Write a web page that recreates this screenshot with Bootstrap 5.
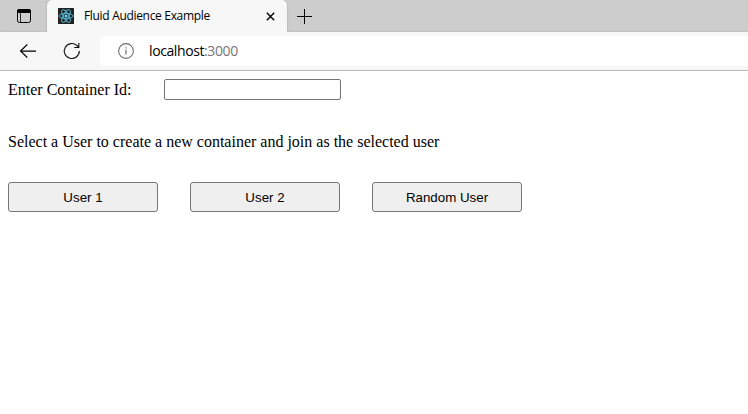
<!DOCTYPE html>
<html lang="en">
<head>
<meta charset="utf-8">
<meta name="viewport" content="width=device-width, initial-scale=1">
<title>Fluid Audience Example</title>
<link href="https://cdn.jsdelivr.net/npm/bootstrap@5.3.0/dist/css/bootstrap.min.css" rel="stylesheet">
<style>
  body { background: #fff; color: #000; overflow: hidden; }
  svg { display: block; flex: none; }
  .chrome { font-family: "Open Sans", "Noto Sans", sans-serif; }
  .tabstrip { height: 32px; background: #cdcdcd; box-shadow: inset 0 -1px 1px #c2c2c2; }
  .menu-cell { width: 47px; padding-left: 17px; }
  .tab-active { width: 240px; padding: 0 12px 0 11px; background: #f7f7f7; border-radius: 5px 5px 0 0; box-shadow: 0 0 2px #999; clip-path: inset(0 -3px 0 -3px); }
  .tab-title { font-size: 12px; line-height: 16px; margin-left: 10px; letter-spacing: -.32px; white-space: nowrap; }
  .new-tab { margin-left: 10px; }
  .toolbar { height: 39px; background: #f7f7f7; border-bottom: 1px solid #bbb; padding-left: 19px; }
  .address { height: 30px; margin-left: 19px; padding-left: 17px; background: #fff; border-radius: 4px 0 0 4px; font-size: 14px; letter-spacing: -.4px; box-shadow: 0 0 2px #eee; }
  .address-text { margin-left: 14px; padding-bottom: 1px; }
  .port { color: #767676; }
  .page { font-family: "Liberation Serif", serif; font-size: 16px; line-height: 18px; padding: 8px; }
  .id-label { width: 156px; }
  .id-input { width: 177px; height: 21px; border: 1px solid #767676; border-radius: 2px; background: #fff; }
  .prompt { margin: 33px 0 31px; }
  .user-buttons { gap: 32px; }
  .user-btn { width: 150px; height: 30px; padding: 0; border: 1px solid #767676; border-radius: 3px; background: #efefef; color: #000; font: 13.333px "Liberation Sans", sans-serif; }
</style>
</head>
<body>
<header class="chrome">
  <div class="tabstrip d-flex align-items-center">
    <div class="menu-cell">
      <svg width="14" height="14" viewBox="0 0 14 14"><rect x=".5" y=".5" width="13" height="13" rx="2" fill="none" stroke="#000"/><path d="M0 4V2a2 2 0 0 1 2-2h10a2 2 0 0 1 2 2v2z"/><path d="M3.5 4v9.5" stroke="#000" stroke-width=".8"/></svg>
    </div>
    <div class="tab-active d-flex align-items-center h-100">
      <svg width="16" height="16" viewBox="0 0 16 16"><rect width="16" height="16" rx=".5" fill="#222"/><g fill="none" stroke="#53b4d0" stroke-width="1"><ellipse cx="8" cy="8" rx="7" ry="2.7"/><ellipse cx="8" cy="8" rx="7" ry="2.7" transform="rotate(60 8 8)"/><ellipse cx="8" cy="8" rx="7" ry="2.7" transform="rotate(120 8 8)"/></g><circle cx="8" cy="8" r="1.5" fill="#61dafb"/></svg>
      <span class="tab-title">Fluid Audience Example</span>
      <svg class="ms-auto" width="9" height="9" viewBox="0 0 9 9"><path d="M.8.8l7.4 7.4M8.2.8L.8 8.2" stroke="#000" stroke-width="1.4"/></svg>
    </div>
    <svg class="new-tab" width="15" height="15" viewBox="0 0 15 15"><path d="M7.5 0v15M0 7.5h15" stroke="#000" stroke-width="1"/></svg>
  </div>
  <div class="toolbar d-flex align-items-center">
    <svg width="18" height="16" viewBox="0 0 18 16"><path d="M8.3 1.5L1.5 8l6.8 6.5M1.5 8.1H17" fill="none" stroke="#000" stroke-width="1.1"/></svg>
    <svg class="ms-4" width="20" height="20" viewBox="0 0 20 20"><path d="M18.3 10A7.5 7.5 0 1 1 16.1 4.7L17.8 6.5M17.8 2v4.5h-4.5" fill="none" stroke="#111" stroke-width="1.15"/></svg>
    <div class="address d-flex align-items-center flex-grow-1">
      <svg width="18" height="18" viewBox="0 0 18 18"><circle cx="9" cy="9" r="7.4" fill="none" stroke="#707070" stroke-width="1.1"/><path d="M9 7.8V12.4M9 5.2v1.3" stroke="#707070" stroke-width="1.2"/></svg>
      <span class="address-text">localhost<span class="port">:3000</span></span>
    </div>
  </div>
</header>
<main class="page">
  <div class="d-flex align-items-center">
    <label class="id-label" for="containerId">Enter Container Id:</label>
    <input class="id-input" id="containerId" type="text">
  </div>
  <p class="prompt">Select a User to create a new container and join as the selected user</p>
  <div class="user-buttons d-flex">
    <button class="user-btn" type="button">User 1</button>
    <button class="user-btn" type="button">User 2</button>
    <button class="user-btn" type="button">Random User</button>
  </div>
</main>
<script src="https://cdn.jsdelivr.net/npm/bootstrap@5.3.0/dist/js/bootstrap.bundle.min.js"></script>
</body>
</html>
